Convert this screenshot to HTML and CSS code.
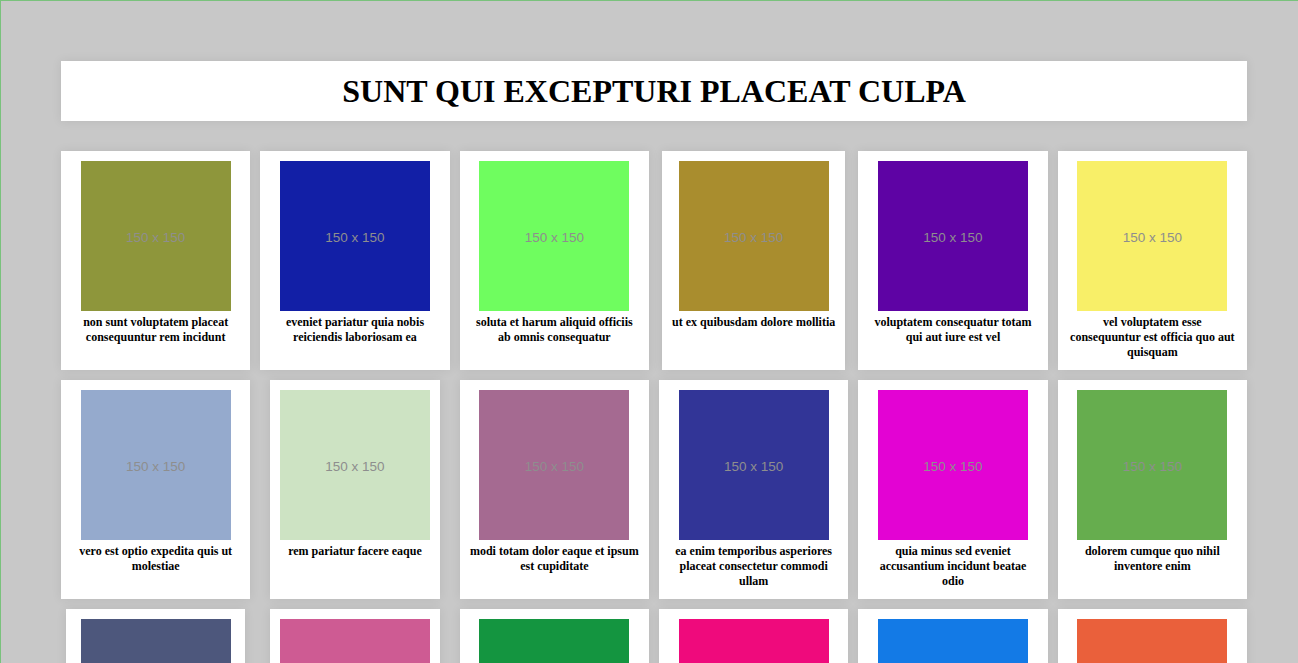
FILE: index.html
```html
<!DOCTYPE html>
<html lang="la">
<head>
<meta charset="utf-8">
<title>Gallery</title>
<link rel="stylesheet" href="styles.css">
</head>
<body>
<div class="page">
  <header class="banner"><h1 class="title">SUNT QUI EXCEPTURI PLACEAT CULPA</h1></header>
  <main class="grid">
    <figure class="card"><div class="thumb" style="background:#8e963b">150 x 150</div><figcaption class="caption">non sunt voluptatem placeat consequuntur rem incidunt</figcaption></figure>
    <figure class="card"><div class="thumb" style="background:#121fa6">150 x 150</div><figcaption class="caption">eveniet pariatur quia nobis reiciendis laboriosam ea</figcaption></figure>
    <figure class="card"><div class="thumb" style="background:#6ffd5f">150 x 150</div><figcaption class="caption">soluta et harum aliquid officiis ab omnis consequatur</figcaption></figure>
    <figure class="card"><div class="thumb" style="background:#a98d2e">150 x 150</div><figcaption class="caption">ut ex quibusdam dolore mollitia</figcaption></figure>
    <figure class="card"><div class="thumb" style="background:#5e03a4">150 x 150</div><figcaption class="caption">voluptatem consequatur totam qui aut iure est vel</figcaption></figure>
    <figure class="card"><div class="thumb" style="background:#f8ef68">150 x 150</div><figcaption class="caption">vel voluptatem esse consequuntur est officia quo aut quisquam</figcaption></figure>

    <figure class="card"><div class="thumb" style="background:#95aacd">150 x 150</div><figcaption class="caption">vero est optio expedita quis ut molestiae</figcaption></figure>
    <figure class="card"><div class="thumb" style="background:#cde3c3">150 x 150</div><figcaption class="caption">rem pariatur facere eaque</figcaption></figure>
    <figure class="card"><div class="thumb" style="background:#a56a91">150 x 150</div><figcaption class="caption">modi totam dolor eaque et ipsum est cupiditate</figcaption></figure>
    <figure class="card"><div class="thumb" style="background:#323597">150 x 150</div><figcaption class="caption">ea enim temporibus asperiores placeat consectetur commodi ullam</figcaption></figure>
    <figure class="card"><div class="thumb" style="background:#e303d3">150 x 150</div><figcaption class="caption">quia minus sed eveniet accusantium incidunt beatae odio</figcaption></figure>
    <figure class="card"><div class="thumb" style="background:#66ad4e">150 x 150</div><figcaption class="caption">dolorem cumque quo nihil inventore enim</figcaption></figure>

    <figure class="card"><div class="thumb" style="background:#4d577c">150 x 150</div><figcaption class="caption">nobis est quae sint odio dolores</figcaption></figure>
    <figure class="card"><div class="thumb" style="background:#ce5b93">150 x 150</div><figcaption class="caption">sit esse rerum eos</figcaption></figure>
    <figure class="card"><div class="thumb" style="background:#149540">150 x 150</div><figcaption class="caption">et eius voluptas autem repellat quibusdam ipsa</figcaption></figure>
    <figure class="card"><div class="thumb" style="background:#ef0a7c">150 x 150</div><figcaption class="caption">magni dolorum voluptate aut nisi sunt velit</figcaption></figure>
    <figure class="card"><div class="thumb" style="background:#137ae6">150 x 150</div><figcaption class="caption">aut omnis est voluptatibus fugit quo dolorem</figcaption></figure>
    <figure class="card"><div class="thumb" style="background:#ea603b">150 x 150</div><figcaption class="caption">qui fuga rerum voluptas nihil quia accusamus</figcaption></figure>
  </main>
</div>
</body>
</html>
```

FILE: styles.css
```css
html, body {
  margin: 0;
  padding: 0;
}

body {
  background: #c8c8c8;
  border-top: 1px solid #79c27c;
  border-left: 1px solid #79c27c;
  font-family: "Liberation Serif", "Times New Roman", serif;
  color: #000;
  min-height: 662px;
}

.page {
  margin: 60px 51px 60px 60px;
}

.banner {
  background: #fff;
  height: 60px;
  display: flex;
  align-items: center;
  justify-content: center;
  box-shadow: 0 0 10px rgba(0, 0, 0, 0.08);
}

.title {
  margin: 0;
  font-size: 32px;
  font-weight: bold;
  line-height: 37px;
  padding-top: 1px;
}

.grid {
  margin-top: 30px;
  display: grid;
  grid-template-columns: repeat(6, minmax(0, 1fr));
  gap: 10px;
  justify-items: center;
}

.card {
  margin: 0;
  background: #fff;
  padding: 10px;
  box-shadow: 0 0 10px rgba(0, 0, 0, 0.08);
  box-sizing: border-box;
  max-width: 100%;
  display: flex;
  flex-direction: column;
  align-items: center;
}

.thumb {
  width: 150px;
  height: 150px;
  flex: none;
  box-sizing: border-box;
  padding-top: 3px;
  display: flex;
  align-items: center;
  justify-content: center;
  font-family: "Liberation Sans", Arial, sans-serif;
  font-size: 13.5px;
  color: #8e8e8e;
}

.caption {
  margin-top: 4px;
  font-size: 12px;
  font-weight: bold;
  line-height: 15px;
  text-align: center;
}
```
